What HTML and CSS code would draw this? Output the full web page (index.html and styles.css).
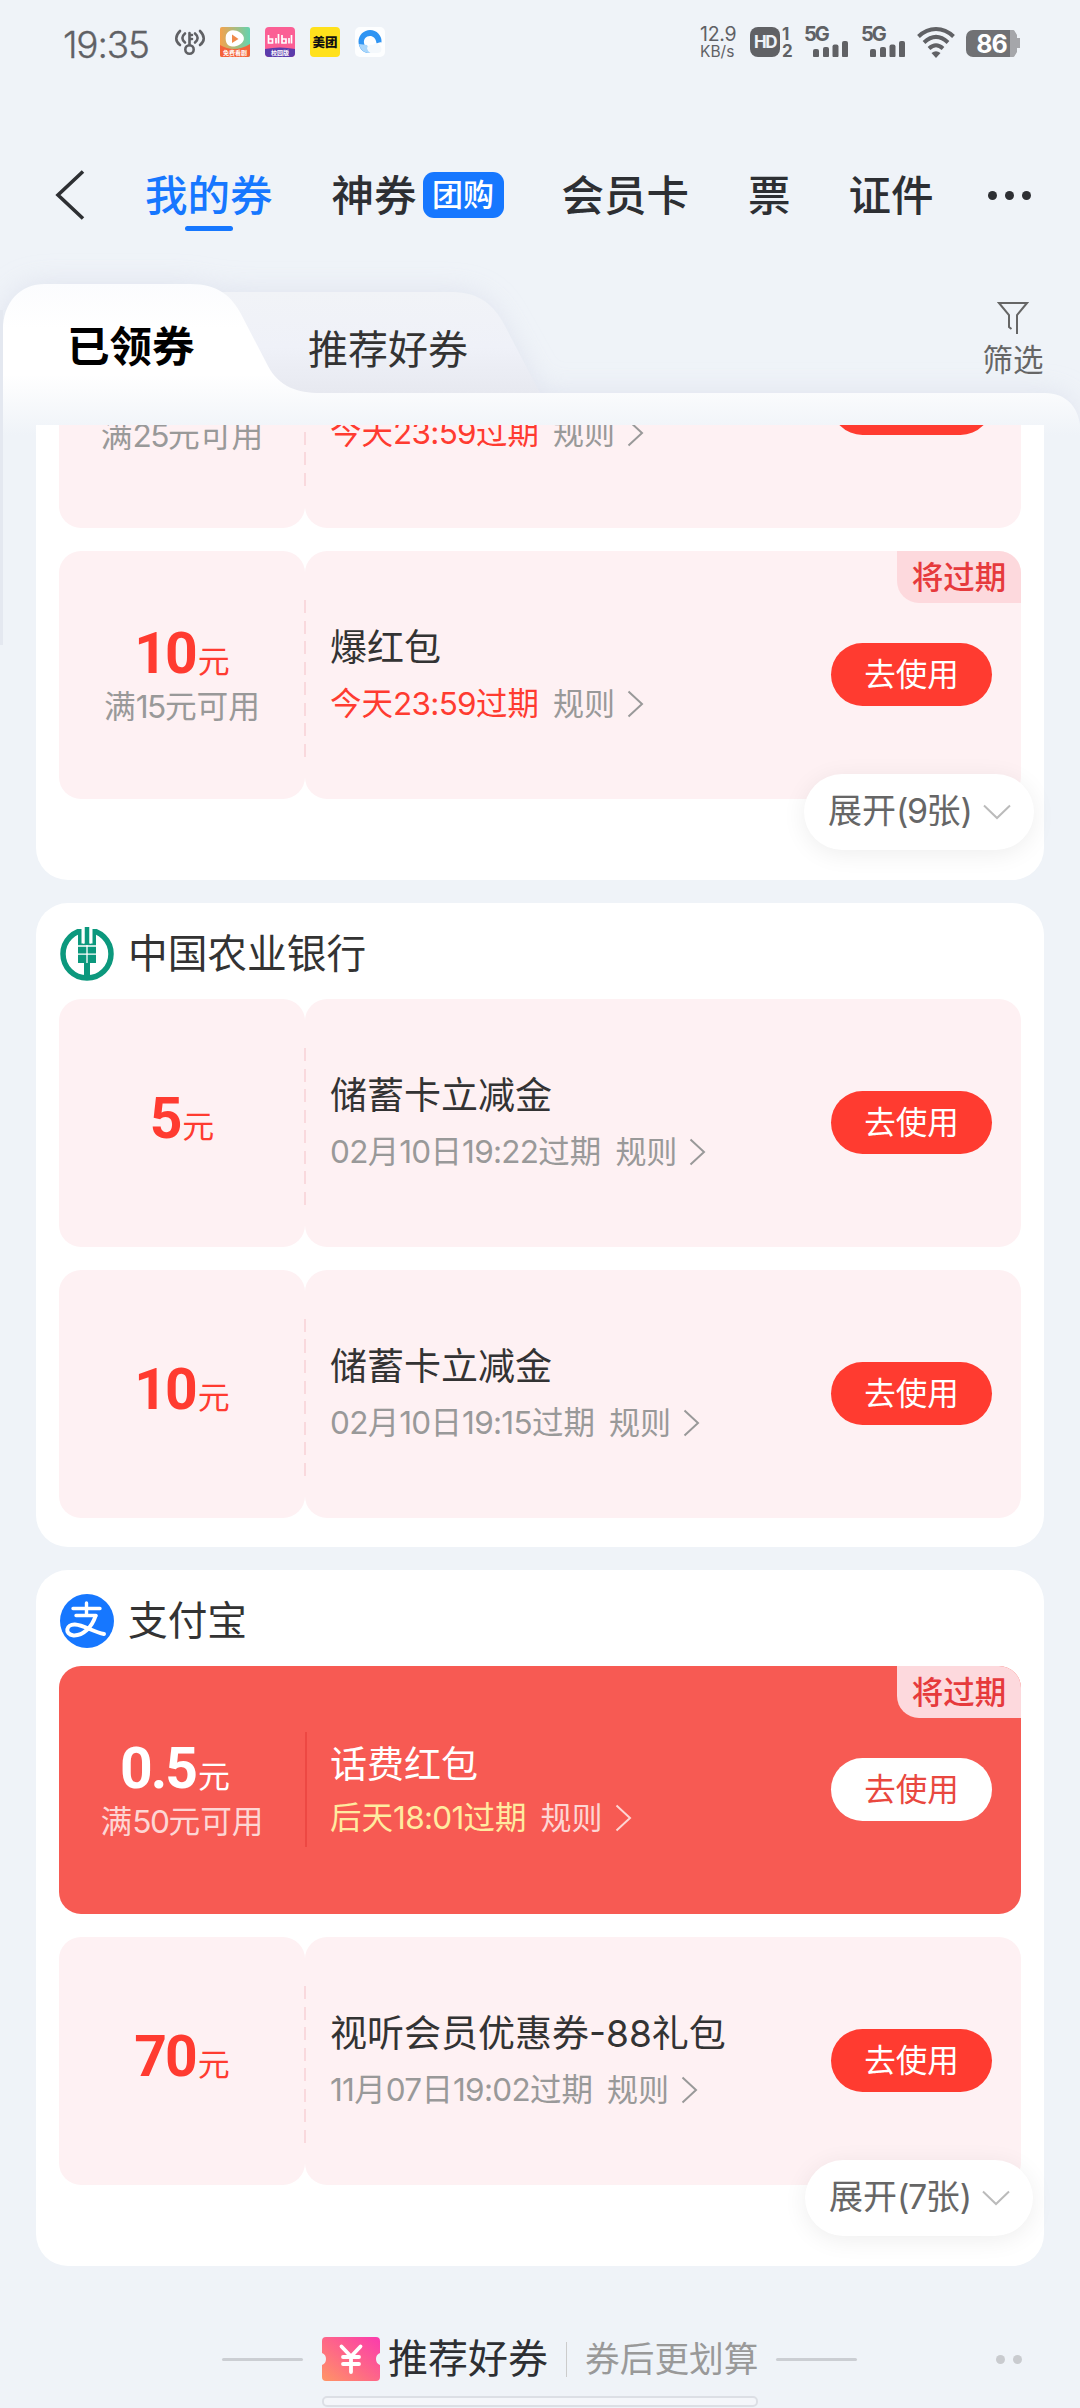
FILE: index.html
```html
<!DOCTYPE html>
<html lang="zh-CN">
<head>
<meta charset="utf-8">
<title>我的券</title>
<link rel="stylesheet" href="styles.css">
</head>
<body>
<svg class="defs" width="0" height="0" aria-hidden="true">
  <symbol id="more" viewBox="0 0 17 28"><path d="M1.5 1.5 15 14 1.5 26.5" fill="none" stroke="currentColor" stroke-width="2"/></symbol>
  <symbol id="down" viewBox="0 0 28 16"><path d="M1 1.5 14 14 27 1.5" fill="none" stroke="currentColor" stroke-width="2"/></symbol>
  <symbol id="signal" viewBox="0 0 36 16"><g fill="#606165"><rect x="0" y="8" width="6" height="8.500" rx="2"/><rect x="10" y="6" width="6" height="10.500" rx="2"/><rect x="19.500" y="3.500" width="6" height="13" rx="2"/><rect x="29" y="0" width="6" height="16.500" rx="2"/></g></symbol>
</svg>

<header class="status">
  <div class="status-left">
    <span class="clock">19:35</span>
    <svg class="hotspot" width="32" height="28" viewBox="0 0 32 28" fill="none" stroke="#606165" stroke-width="2.600" stroke-linecap="round">
      <path d="M6 3C1 8 1 13 6 17M11 5.500c-3.500 3-3.500 6 0 9M26 3c5 5 5 10 0 14M21 5.500c3.500 3 3.500 6 0 9M15.500 17V5M15.500 7h2.500M15.500 11h2.500"/><circle cx="15.500" cy="21.500" r="4.200"/>
    </svg>
    <div class="apps">
      <svg width="30" height="30" viewBox="0 0 30 30">
        <defs><linearGradient id="v1" x1="0" y1="0" x2="1" y2="0"><stop offset="0" stop-color="#f5a24c"/><stop offset="1" stop-color="#62d3b0"/></linearGradient></defs>
        <rect width="30" height="30" rx="2" fill="url(#v1)"/><path d="M0 18c10 6 20 5 30-1v11a2 2 0 0 1-2 2H2a2 2 0 0 1-2-2z" fill="#f4623a"/>
        <path d="M6 8C8 2 15 2 20 5.500c6 4 5 10-2 13-2 1-5 1-6 1C6 19 5 13 6 8z" fill="#fff"/><path d="M12 7.500 18.500 12 12 16z" fill="#ef8a4b"/>
        <text x="15" y="28" class="app-tiny">免费看剧</text>
      </svg>
      <svg width="30" height="30" viewBox="0 0 30 30">
        <defs><clipPath id="b1"><rect width="30" height="30" rx="4"/></clipPath></defs>
        <g clip-path="url(#b1)"><rect width="30" height="30" fill="#fb5f95"/><path d="M0 22q15-3 30 0v8H0z" fill="#5a3bab"/></g>
        <g fill="none" stroke="#fff" stroke-width="1.700"><path d="M3.500 8v8h4v-4h-4M11 11v5.500M13.500 7v9.500M17 8v8h4v-4h-4M24 11v5.500M26.500 8v8.500"/></g>
        <text x="15" y="28" class="app-tiny">校园版</text>
      </svg>
      <svg width="30" height="30" viewBox="0 0 30 30"><rect width="30" height="30" rx="4" fill="#ffe11c"/><text x="15" y="19.700" class="app-mt">美团</text></svg>
      <svg width="30" height="30" viewBox="0 0 30 30">
        <rect width="30" height="30" rx="5" fill="#fdfeff"/>
        <path d="M15 3a11.500 11.500 0 0 1 11.500 12.500c-1.500-.8-3.500.5-5 1C21 11 18 9 15 9c-4 0-6.500 3-6 7 .5 3 2 4 3 5 0 2 1 4 2 5C7 26 3.500 20 3.500 14.500 3.500 8 9 3 15 3z" fill="#2e94f3"/>
        <path d="M4 17c1 6 6 9.500 12 9l-4-8z" fill="#a9d6fb"/><path d="M12 21c1-3 4-4 6-3 3-3 8-1 8.500 4 0 3-2 4-4 4h-7c-2-1-3-3-3.500-5z" fill="#f4f8fc"/>
      </svg>
    </div>
  </div>
  <div class="status-right">
    <div class="speed"><span>12.9</span><span class="unit">KB/s</span></div>
    <div class="hd"><b>HD</b></div>
    <div class="sims"><span>1</span><span>2</span></div>
    <div class="cell"><b>5G</b><svg width="36" height="16"><use href="#signal"/></svg></div>
    <div class="cell second"><b>5G</b><svg width="36" height="16"><use href="#signal"/></svg></div>
    <svg class="wifi" width="38" height="31" viewBox="0 0 38 31" fill="none" stroke="#606165" stroke-width="4">
      <path d="M1.500 9.500C12-.5 26-.5 36.500 9.500M7 15.500c8-7.500 16-7.500 24 0M12 21.500c5-4.500 9-4.500 14 0"/><path d="M14.500 26q4.500-3.500 9 0L19 31z" fill="#606165" stroke="none"/>
    </svg>
    <div class="battery"><b>86</b></div>
  </div>
</header>

<nav class="nav">
  <svg class="back" width="30" height="50" viewBox="0 0 30 50"><path d="M28 1.500 3 25l25 23.500" fill="none" stroke="#2d2f33" stroke-width="3.600"/></svg>
  <a class="nav-item current">我的券</a>
  <a class="nav-item shen">神券<span class="badge">团购</span></a>
  <a class="nav-item member">会员卡</a>
  <a class="nav-item ticket">票</a>
  <a class="nav-item papers">证件</a>
  <span class="dots"><i></i><i></i><i></i></span>
</nav>

<section class="tabs">
  <svg class="tab-shape" width="1080" height="440" viewBox="0 0 1080 440">
    <defs>
      <linearGradient id="g1" gradientUnits="userSpaceOnUse" x1="0" y1="34" x2="0" y2="185"><stop offset="0" stop-color="#fbfcfe"/><stop offset=".3" stop-color="#fff"/><stop offset=".6" stop-color="#fff"/><stop offset="1" stop-color="#eff3f8"/></linearGradient>
      <linearGradient id="g2" gradientUnits="userSpaceOnUse" x1="0" y1="42" x2="0" y2="143"><stop offset="0" stop-color="#f1f3f7"/><stop offset=".55" stop-color="#eff1f8"/><stop offset="1" stop-color="#e7e9f0"/></linearGradient>
      <filter id="soft" x="-20%" y="-30%" width="140%" height="160%"><feGaussianBlur stdDeviation="14"/></filter>
    </defs>
    <path d="M3 300V80C3 52 20 34 45 34H190Q215 42 250 42H452Q485 42 500 72L540 143H1045Q1075 145 1077 172V185H3z" fill="#d9ddea" opacity=".75" filter="url(#soft)"/>
    <path d="M215 42H452C480 42 494 56 504 74L540 143V150H215z" fill="url(#g2)"/>
    <path d="M3 180V80C3 52 20 34 45 34H190C219 34 232 47 241 64L268 116C279 137 298 143 320 143H1045C1066 143 1078 157 1080 175V395H3z" fill="url(#g1)"/>
    <path d="M0 60h3v335H0z" fill="#e4e8f0"/>
  </svg>
  <a class="tab active">已领券</a>
  <a class="tab other">推荐好券</a>
  <a class="filter">
    <svg width="32" height="34" viewBox="0 0 32 34" fill="none" stroke="#666" stroke-width="2"><path d="M14.500 28 12 26V14L2 2H30L20 14V33"/></svg>
    <span>筛选</span>
  </a>
</section>

<main class="list">
  <section class="card first">
    <article class="coupon peek">
      <div class="worth"><p class="cond">满<span class="n">25</span>元可用</p></div>
      <div class="info"><div class="text"><p class="date urgent"><span>今天<span class="n">23:59</span>过期</span><span class="rule">规则<svg width="17" height="28"><use href="#more"/></svg></span></p></div><a class="use"></a></div>
    </article>
    <article class="coupon">
      <div class="worth"><p class="amount"><b>10</b>元</p><p class="cond">满<span class="n">15</span>元可用</p></div>
      <div class="info"><div class="text"><h3>爆红包</h3><p class="date urgent"><span>今天<span class="n">23:59</span>过期</span><span class="rule">规则<svg width="17" height="28"><use href="#more"/></svg></span></p></div><a class="use">去使用</a></div>
      <span class="tag">将过期</span>
    </article>
    <a class="expand"><span>展开<span class="n">(9</span>张)</span><svg width="28" height="16"><use href="#down"/></svg></a>
  </section>

  <section class="card">
    <h2 class="brand">
      <svg width="56" height="56" viewBox="0 0 56 56"><circle cx="28" cy="28" r="24" fill="#fff" stroke="#0c987d" stroke-width="5.500"/><path d="M19 0h18v18H19z" fill="#fff"/><path d="M25.500 1h5v17h-5zM19 3h3.500v14.500h11V3H37v16H19z" fill="#0c987d"/><path d="M24 1h1.500v16.500H24zM30.500 1H32v16.500h-1.500z" fill="#fff"/><path d="M19 19h18v18H31v16h-6V37h-6z" fill="#0c987d"/><path d="M19 28.200h18M28 19v18M19 20h18" stroke="#fff" stroke-width="1.300"/></svg>
      <span>中国农业银行</span>
    </h2>
    <article class="coupon">
      <div class="worth solo"><p class="amount"><b>5</b>元</p></div>
      <div class="info"><div class="text"><h3>储蓄卡立减金</h3><p class="date"><span><span class="n">02</span>月<span class="n">10</span>日<span class="n">19:22</span>过期</span><span class="rule">规则<svg width="17" height="28"><use href="#more"/></svg></span></p></div><a class="use">去使用</a></div>
    </article>
    <article class="coupon">
      <div class="worth solo"><p class="amount"><b>10</b>元</p></div>
      <div class="info"><div class="text"><h3>储蓄卡立减金</h3><p class="date"><span><span class="n">02</span>月<span class="n">10</span>日<span class="n">19:15</span>过期</span><span class="rule">规则<svg width="17" height="28"><use href="#more"/></svg></span></p></div><a class="use">去使用</a></div>
    </article>
  </section>

  <section class="card roomy">
    <h2 class="brand">
      <svg width="56" height="56" viewBox="0 0 56 56"><circle cx="28" cy="28" r="27" fill="#1677ff"/><g fill="none" stroke="#fff" stroke-width="3.400" stroke-linecap="round"><path d="M14 15.500H41M27.500 10V22M17 22.500H37"/><path d="M36.500 23C33 34 24 43 14.500 42.500 5 41 7 31 16 31.500 25 32 34 39 45 41" stroke-width="4"/></g></svg>
      <span>支付宝</span>
    </h2>
    <article class="coupon hot">
      <div class="worth"><p class="amount"><b>0.5</b>元</p><p class="cond">满<span class="n">50</span>元可用</p></div>
      <div class="info"><div class="text"><h3>话费红包</h3><p class="date urgent"><span>后天<span class="n">18:01</span>过期</span><span class="rule">规则<svg width="17" height="28"><use href="#more"/></svg></span></p></div><a class="use">去使用</a></div>
      <span class="tag">将过期</span>
    </article>
    <article class="coupon">
      <div class="worth solo"><p class="amount"><b>70</b>元</p></div>
      <div class="info"><div class="text"><h3>视听会员优惠券-88礼包</h3><p class="date"><span><span class="n">11</span>月<span class="n">07</span>日<span class="n">19:02</span>过期</span><span class="rule">规则<svg width="17" height="28"><use href="#more"/></svg></span></p></div><a class="use">去使用</a></div>
    </article>
    <a class="expand narrow"><span>展开<span class="n">(7</span>张)</span><svg width="28" height="16"><use href="#down"/></svg></a>
  </section>

  <section class="recommend">
    <i class="line"></i>
    <svg width="58" height="44" viewBox="0 0 58 44"><defs><linearGradient id="tk" x1="0" y1="1" x2="1" y2="0"><stop offset="0" stop-color="#ff9565"/><stop offset=".45" stop-color="#fe6a85"/><stop offset="1" stop-color="#fb3aae"/></linearGradient></defs><path d="M4 0H54a4 4 0 0 1 4 4V16a6.500 6.500 0 0 0 0 12V40a4 4 0 0 1-4 4H4a4 4 0 0 1-4-4V28a6.500 6.500 0 0 0 0-12V4a4 4 0 0 1 4-4z" fill="url(#tk)"/><path d="M19.500 9.500 29 19.500 38.500 9.500M21 20H37M21 27H37M29 20V35" fill="none" stroke="#fff" stroke-width="3.800" stroke-linecap="round"/></svg>
    <strong>推荐好券</strong>
    <i class="sep"></i>
    <span class="slogan">券后更划算</span>
    <i class="line"></i>
    <span class="pager"><i></i><i></i></span>
  </section>
  <div class="placeholder"></div>
</main>
</body>
</html>
```

FILE: styles.css
```css
* { box-sizing: border-box; margin: 0; padding: 0; }

body {
  width: 1080px;
  height: 2408px;
  overflow: hidden;
  background: #eff3f8;
  color: #333;
  font-family: Inter, "Noto Sans CJK SC", sans-serif;
}

i { font-style: normal; }
p, h2, h3 { font-weight: 400; white-space: nowrap; }
svg { display: block; flex: none; }
.defs { position: absolute; }

/* Status bar */
.status {
  display: flex;
  justify-content: space-between;
  height: 140px;
  padding: 27px 60px 0 63px;
  color: #606165;
}
.status-left, .status-right { display: flex; align-items: flex-start; height: 31px; }
.clock { width: 111px; font-size: 37px; line-height: 36px; font-weight: 300; letter-spacing: -1.2px; -webkit-text-stroke: .3px; }
.hotspot { margin-top: 1px; }
.apps { display: flex; gap: 15px; margin-left: 14px; }
.app-tiny { font: 700 6px "Noto Sans CJK SC", sans-serif; fill: #fff; text-anchor: middle; }
.app-mt { font: 900 12.500px "Noto Sans CJK SC", sans-serif; fill: #111; text-anchor: middle; }

.speed { display: flex; flex-direction: column; width: 50px; font-size: 19.500px; line-height: 15px; letter-spacing: -.3px; }
.speed .unit { margin-top: 3px; font-size: 15.500px; letter-spacing: 0; line-height: 13px; }
.hd {
  width: 30px;
  height: 30px;
  border-radius: 8px;
  background: #606165;
  color: #eff3f8;
  font-size: 17px;
  line-height: 30px;
  text-align: center;
  letter-spacing: -1.5px;
}
.sims { display: flex; flex-direction: column; gap: 3px; width: 24px; padding-left: 2px; font-size: 17px; line-height: 14px; font-weight: 700; }
.cell { width: 57px; }
.cell b { display: block; height: 14px; font-size: 20px; line-height: 14px; letter-spacing: -2px; }
.cell svg { margin-left: 9px; }
.cell.second { width: 56px; }
.wifi { margin-right: 11px; }
.battery {
  width: 54px;
  height: 27px;
  margin-top: 3px;
  padding-right: 3px;
  border-radius: 7px;
  background: linear-gradient(90deg, #707174 0 44px, #a5a6aa 44px 51px, #a5a6aa 51px);
  color: #fff;
  font-size: 25px;
  line-height: 28px;
  text-align: center;
  letter-spacing: -1px;
  clip-path: polygon(0 0, 48px 0, 51px 5px, 51px 8px, 54px 8px, 54px 18px, 51px 18px, 51px 22px, 48px 100%, 0 100%);
}

/* Top navigation */
.nav {
  display: flex;
  align-items: center;
  height: 110px;
  padding-left: 55px;
  color: #2d2f33;
}
.nav-item { display: flex; align-items: center; padding-top: 1px; font-size: 42.500px; line-height: 60px; font-weight: 500; white-space: nowrap; }
.current { position: relative; margin-left: 60px; color: #1677ff; }
.current::after {
  content: "";
  position: absolute;
  bottom: -5px;
  left: 40px;
  width: 48px;
  height: 5px;
  border-radius: 3px;
  background: #1677ff;
}
.shen { margin-left: 59px; }
.badge {
  width: 81px;
  height: 46px;
  margin: -2px 0 0 6px;
  border-radius: 11px;
  background: #1677ff;
  color: #fff;
  font-size: 31px;
  line-height: 45px;
  text-align: center;
}
.member { margin-left: 58px; }
.ticket { margin-left: 59px; }
.papers { margin-left: 58px; }
.dots { display: flex; gap: 8px; margin-left: 54px; }
.dots i { width: 9px; height: 9px; border-radius: 50%; background: #2d2f33; }

/* Folder tabs */
.tabs { position: relative; display: flex; height: 175px; }
.tab-shape { position: absolute; top: 0; left: 0; }
.tab, .filter { position: relative; white-space: nowrap; }
.active { margin-left: 67px; padding-top: 67px; width: 241px; font-size: 42.500px; line-height: 60px; font-weight: 700; color: #000; }
.other { padding-top: 70px; width: 673px; font-size: 40px; line-height: 60px; }
.filter { display: flex; flex-direction: column; align-items: center; padding-top: 51px; width: 64px; color: #666; font-size: 30.500px; line-height: 40px; }
.filter span { margin-top: 5px; }

/* Coupon list, scrolled under the tabs */
.list { position: relative; height: 1983px; padding: 0 36px; overflow: hidden; }
.card { position: relative; margin-bottom: 23px; padding: 0 23px 29px; border-radius: 32px; background: #fff; }
.card.first { margin-top: -241px; padding-top: 96px; padding-bottom: 81px; }
.card.roomy { padding-bottom: 81px; }
.brand { display: flex; align-items: center; gap: 13px; height: 96px; padding-top: 6px; font-size: 39.700px; line-height: 56px; }
.brand span { margin-top: -1px; }

.coupon { position: relative; display: grid; grid-template-columns: 246px 1fr; height: 248px; }
.coupon + .coupon { margin-top: 23px; }
.worth, .info { border-radius: 22px; background: #fef1f3; }
.coupon::after {
  content: "";
  position: absolute;
  top: 49px;
  left: 245px;
  width: 2px;
  height: 157px;
  background: repeating-linear-gradient(#f9d9dd 0 13px, transparent 13px 20.500px);
}
.worth { padding-top: 73px; text-align: center; }
.worth.solo { padding-top: 90px; }
.amount { height: 60px; color: #ff3b30; font-size: 32px; line-height: 60px; }
.amount b { font-family: Roboto, sans-serif; font-size: 57px; line-height: 60px; letter-spacing: -2px; margin-right: 2px; }
.cond { margin-top: 3px; color: #999; font-size: 31.700px; line-height: 40px; }
.n { letter-spacing: -.7px; }
.cond .n { letter-spacing: -1.500px; }
.info { display: flex; justify-content: space-between; align-items: flex-start; padding: 0 29px 0 25px; }
.text { padding-top: 75px; }
.text h3 { font-size: 37px; line-height: 44px; }
.date { display: flex; gap: 14px; margin-top: 14px; color: #999; font-size: 31.500px; line-height: 40px; }
.date.urgent { color: #ff3b30; }
.rule { display: flex; align-items: center; gap: 12px; color: #999; font-size: 31px; }
.use {
  width: 161px;
  height: 63px;
  margin-top: 92px;
  border-radius: 32px;
  background: #ff3b30;
  color: #fff;
  font-size: 31.500px;
  line-height: 64px;
  text-align: center;
}
.tag {
  position: absolute;
  top: 0;
  right: 0;
  width: 124px;
  height: 52px;
  border-radius: 0 22px 0 22px;
  background: #fdd9dd;
  color: #e63a3c;
  font-size: 31.500px;
  line-height: 53px;
  font-weight: 500;
  text-align: center;
}

.peek .worth { padding-top: 133px; }
.peek .text { padding-top: 119px; }

.hot { border-radius: 22px; background: #f75a53; }
.hot .worth, .hot .info { background: none; }
.hot::after { top: 66px; left: 246px; height: 115px; background: #ed4843; }
.hot .amount { padding-right: 14px; }
.hot .amount, .hot h3 { color: #fff; }
.hot .cond, .hot .rule { color: #fdd6d4; }
.hot .text { padding-top: 77px; }
.hot .date { margin-top: 11px; }
.hot .date.urgent { color: #ffeba0; }
.hot .use { background: #fff; color: #e9483f; }

.expand {
  position: absolute;
  right: 10px;
  bottom: 30px;
  display: flex;
  align-items: center;
  width: 230px;
  height: 76px;
  padding-left: 24px;
  border-radius: 38px;
  background: #fff;
  box-shadow: 0 4px 24px rgba(0, 0, 0, .07);
  color: #666;
  font-size: 34px;
  line-height: 74px;
  white-space: nowrap;
}
.expand > span { height: 76px; }
.expand .n { letter-spacing: -1.500px; }
.expand svg { margin-left: auto; margin-right: 23px; color: #bbb; }
.expand.narrow { right: 11px; width: 228px; }

/* Recommendation heading */
.recommend { position: relative; display: flex; align-items: center; height: 66px; margin-top: 60px; padding-left: 186px; line-height: 60px; }
.line { width: 81px; height: 3px; border-radius: 2px; background: #cbced3; }
.recommend > svg { margin-left: 19px; }
.recommend strong { margin-left: 8px; font-size: 40px; font-weight: 400; color: #2d2f33; }
.sep { width: 1px; height: 35px; margin-left: 18px; background: #ccc; }
.slogan { margin: 0 18px 0 18px; font-size: 34.700px; color: #999; }
.pager { display: flex; gap: 8px; margin-left: 139px; }
.pager i { width: 9px; height: 9px; border-radius: 50%; background: #c9cbcf; }
.placeholder { width: 436px; height: 11px; margin: 4px auto 0; border: 2px solid #dcdfe5; border-radius: 5px; background: #f4f6fa; }
```
